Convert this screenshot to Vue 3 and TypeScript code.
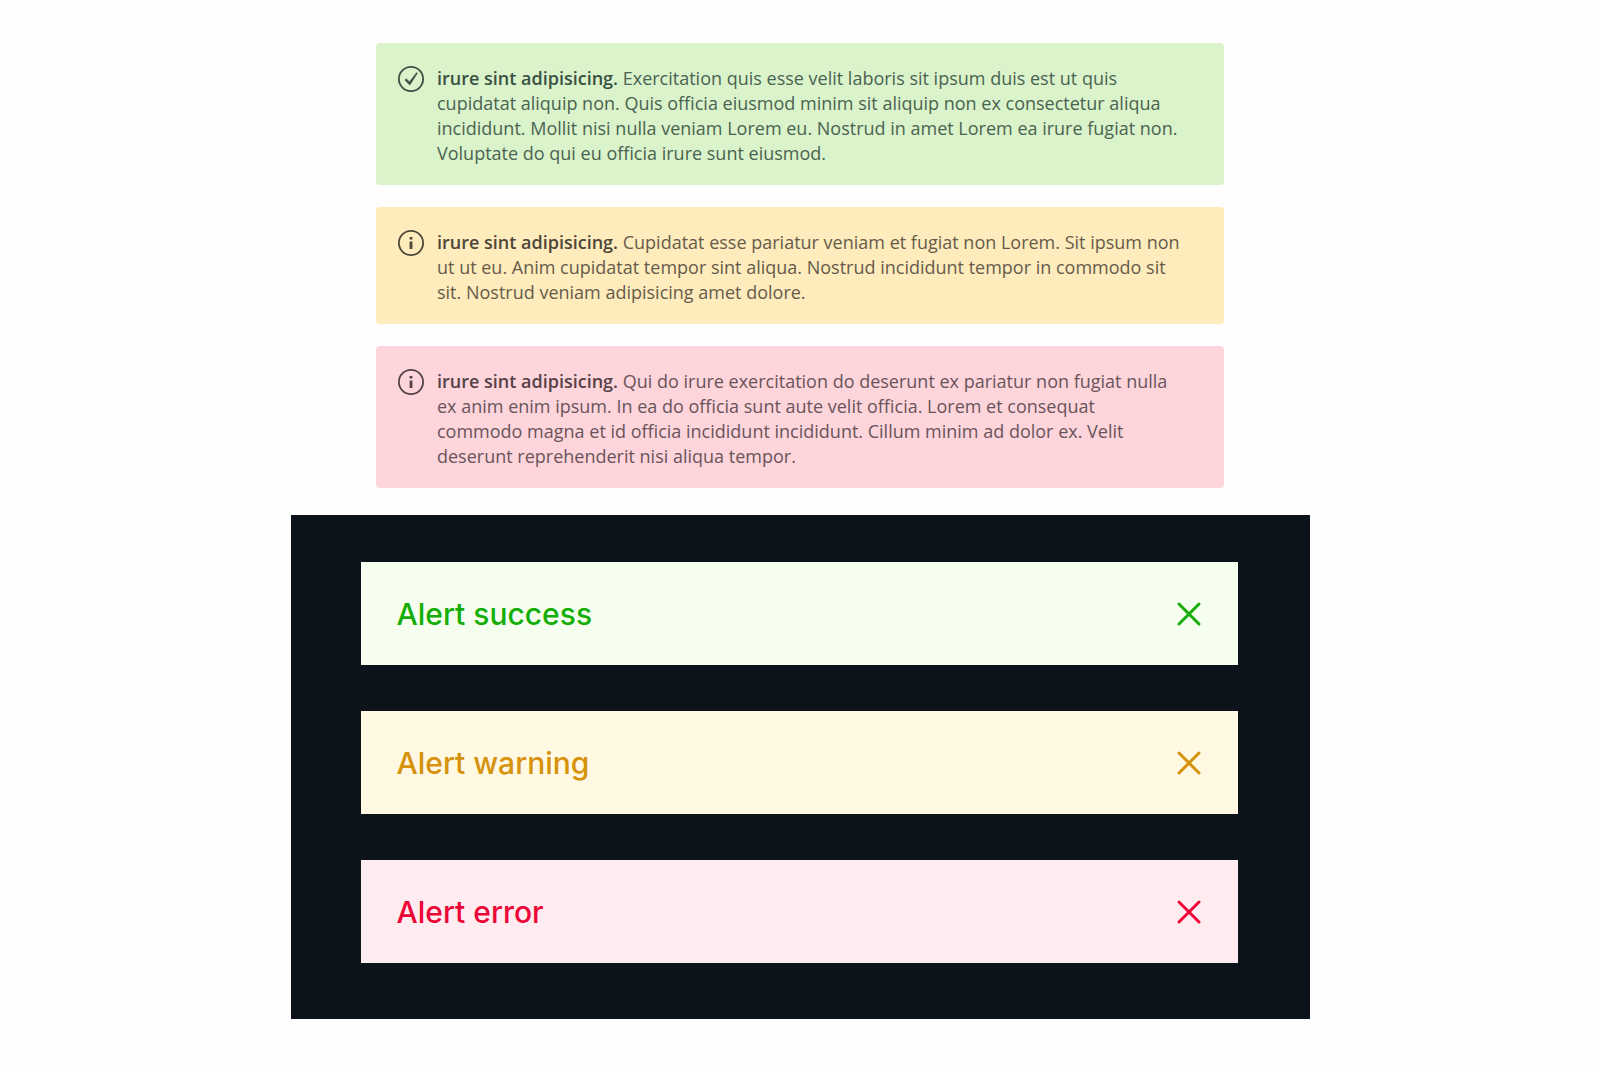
<script setup lang="ts">
import { ref } from 'vue'

type Tone = 'success' | 'warning' | 'error'

interface Note {
  tone: Tone
  title: string
  body: string
}

interface Alert {
  tone: Tone
  label: string
}

const notes: Note[] = [
  {
    tone: 'success',
    title: 'irure sint adipisicing.',
    body: 'Exercitation quis esse velit laboris sit ipsum duis est ut quis cupidatat aliquip non. Quis officia eiusmod minim sit aliquip non ex consectetur aliqua incididunt. Mollit nisi nulla veniam Lorem eu. Nostrud in amet Lorem ea irure fugiat non. Voluptate do qui eu officia irure sunt eiusmod.',
  },
  {
    tone: 'warning',
    title: 'irure sint adipisicing.',
    body: 'Cupidatat esse pariatur veniam et fugiat non Lorem. Sit ipsum non ut ut eu. Anim cupidatat tempor sint aliqua. Nostrud incididunt tempor in commodo sit sit. Nostrud veniam adipisicing amet dolore.',
  },
  {
    tone: 'error',
    title: 'irure sint adipisicing.',
    body: 'Qui do irure exercitation do deserunt ex pariatur non fugiat nulla ex anim enim ipsum. In ea do officia sunt aute velit officia. Lorem et consequat commodo magna et id officia incididunt incididunt. Cillum minim ad dolor ex. Velit deserunt reprehenderit nisi aliqua tempor.',
  },
]

const alerts = ref<Alert[]>([
  { tone: 'success', label: 'Alert success' },
  { tone: 'warning', label: 'Alert warning' },
  { tone: 'error', label: 'Alert error' },
])

function dismiss(tone: Tone) {
  alerts.value = alerts.value.filter((a) => a.tone !== tone)
}
</script>

<template>
  <main class="page">
    <section class="notes">
      <article v-for="note in notes" :key="note.tone" class="note" :class="note.tone">
        <svg class="note-icon" viewBox="1 1 26 26" fill="none" stroke="currentColor" aria-hidden="true">
          <circle cx="14" cy="14" r="12.1" stroke-width="1.8" />
          <path
            v-if="note.tone === 'success'"
            d="M7.8 14.9L9.3 13.7L12.4 16.7L19.6 7.6L20.5 8.2L12.8 20.2Z"
            fill="currentColor"
            stroke-width="0.4"
            stroke-linejoin="round"
          />
          <path v-else d="M12.6 7.9H15.4V10.4H12.6ZM12.6 12.4H15.4V20H12.6Z" fill="currentColor" stroke="none" />
        </svg>
        <p class="note-text"><strong>{{ note.title }}</strong> {{ note.body }}</p>
      </article>
    </section>

    <section class="panel">
      <div v-for="alert in alerts" :key="alert.tone" class="alert" :class="alert.tone" role="alert">
        <span class="alert-label">{{ alert.label }}</span>
        <button class="close" type="button" aria-label="Dismiss" @click="dismiss(alert.tone)">
          <svg viewBox="0 0 26 26" fill="none" stroke="currentColor" stroke-width="3" stroke-linecap="round" aria-hidden="true">
            <path d="M3 3L23 23M23 3L3 23" />
          </svg>
        </button>
      </div>
    </section>
  </main>
</template>

<style>
body {
  margin: 0;
  background: #fefefe;
}
</style>

<style scoped>
.page {
  display: flex;
  flex-direction: column;
  align-items: center;
  gap: 27px;
  padding: 43px 24px 48px;
}

.notes {
  display: flex;
  flex-direction: column;
  gap: 22px;
  width: 100%;
  max-width: 848px;
}

.note {
  display: flex;
  align-items: flex-start;
  gap: 13px;
  padding: 23px 41px 19px 22px;
  border-radius: 4px;
  font-family: 'Open Sans', 'Noto Sans', sans-serif;
  font-size: 18px;
  line-height: 25px;
}

.note.success {
  background: #daf3cb;
  color: #4a6350;
}

.note.warning {
  background: #feecbc;
  color: #675b4b;
}

.note.error {
  background: #fed5db;
  color: #69545a;
}

.note-icon {
  flex: none;
  width: 26px;
  height: 26px;
}

.note.success .note-icon,
.note.success strong {
  color: #3a5142;
}

.note.warning .note-icon,
.note.warning strong {
  color: #4f463a;
}

.note.error .note-icon,
.note.error strong {
  color: #554248;
}

.note-text {
  margin: 0;
}

.note-text strong {
  font-weight: 600;
}

.panel {
  box-sizing: border-box;
  display: flex;
  flex-direction: column;
  gap: 46px;
  width: 100%;
  max-width: 1019px;
  padding: 47px 72px 56px 70px;
  background: #0d131a;
}

.alert {
  box-sizing: border-box;
  display: flex;
  align-items: center;
  justify-content: space-between;
  min-height: 103px;
  padding: 0 36px;
  font-family: Inter, 'Liberation Sans', sans-serif;
  font-size: 30px;
  font-weight: 500;
  line-height: 40px;
}

.alert.success {
  background: #f6ffef;
  color: #15ad08;
}

.alert.warning {
  background: #fff8e3;
  color: #d6920a;
}

.alert.error {
  background: #ffecf0;
  color: #ec0637;
}

.close {
  display: flex;
  padding: 0;
  border: 0;
  background: none;
  color: inherit;
  cursor: pointer;
}

.close svg {
  width: 26px;
  height: 26px;
}
</style>
